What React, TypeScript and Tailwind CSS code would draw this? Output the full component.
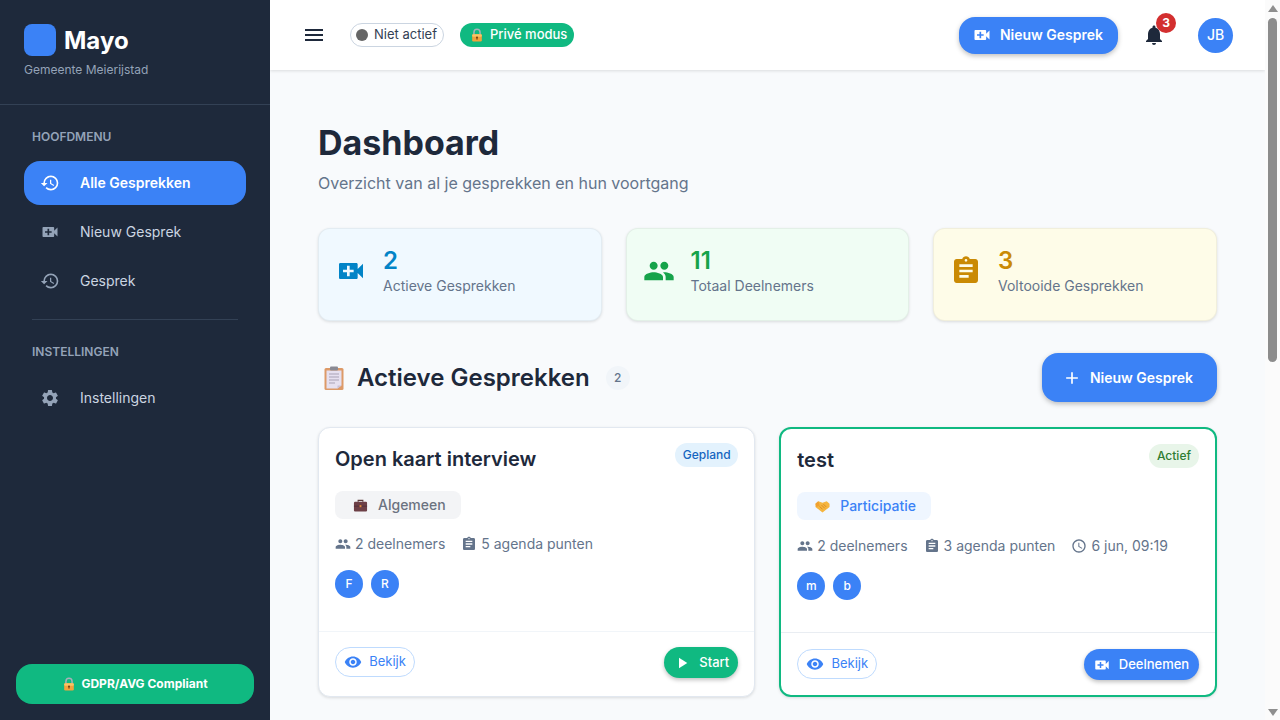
import type { ReactNode } from 'react'
import {
  MdAccessTime,
  MdAdd,
  MdAssignment,
  MdHistory,
  MdMenu,
  MdNotifications,
  MdPeople,
  MdPlayArrow,
  MdSettings,
  MdVideoCall,
  MdVisibility,
} from 'react-icons/md'

function LockEmoji({ size = 14 }: { size?: number }) {
  return (
    <svg width={size} height={size} viewBox="0 0 16 16" className="shrink-0">
      <path d="M4.5 8V5a3.5 3.5 0 0 1 7 0v3" fill="none" stroke="#a8b0b8" strokeWidth="1.7" />
      <rect x="2.5" y="7" width="11" height="8.5" rx="1.5" fill="#f2a33c" />
      <rect x="2.5" y="7" width="11" height="3" rx="1.2" fill="#f9c566" />
      <circle cx="8" cy="10.8" r="1.1" fill="#6b3d12" />
      <rect x="7.5" y="11" width="1" height="2.4" fill="#6b3d12" />
    </svg>
  )
}

function ClipboardEmoji() {
  return (
    <svg width="24" height="24" viewBox="0 0 24 24" className="shrink-0">
      <rect x="2.5" y="2" width="19" height="22" rx="1.5" fill="#dd9a68" />
      <path d="M4.5 4.5h15v15l-4 3h-11z" fill="#e6e0f0" />
      <path d="M15.5 22.5v-3h4z" fill="#c9c0d6" />
      <rect x="8" y="0.5" width="8" height="4" rx="1" fill="#8a8a94" />
      <path d="M7 8h10M7 11h10M7 14h10M7 17h6" stroke="#a9a2b6" strokeWidth="1" />
    </svg>
  )
}

function BriefcaseEmoji() {
  return (
    <svg width="15" height="15" viewBox="0 0 16 16" className="shrink-0">
      <path d="M5.5 4V2.5h5V4" fill="none" stroke="#5b3a3a" strokeWidth="1.2" />
      <rect x="1" y="4" width="14" height="10.5" rx="1.2" fill="#6d3f46" />
      <rect x="1" y="8.2" width="14" height="1" fill="#54303a" />
      <rect x="7" y="7.6" width="2" height="2.2" fill="#e08a3a" />
    </svg>
  )
}

function HandshakeEmoji() {
  return (
    <svg width="15" height="15" viewBox="0 0 16 16" className="shrink-0">
      <path d="M0.5 5 3.5 2.5 8 4l4.5-1.5 3 2.5v3.5L8 14.5 0.5 8.5z" fill="#f5b53f" />
      <path d="M5 8l3 3M7 6.5l3.5 3.5M9 5.5l3 3" stroke="#d98a20" strokeWidth="1" fill="none" />
      <path d="M0.5 5 3.5 2.5 5 7 1.5 8.5z" fill="#f0a030" />
    </svg>
  )
}

function NavItem({ icon, label, active }: { icon: ReactNode; label: string; active?: boolean }) {
  return (
    <div
      className={
        active
          ? 'flex h-11 items-center gap-[20px] rounded-2xl bg-[#3b82f6] px-4 text-sm font-semibold text-white'
          : 'flex h-11 items-center gap-[20px] rounded-2xl px-4 text-sm text-[#cbd5e1]'
      }
    >
      <span className={active ? 'text-white' : 'text-[#94a3b8]'}>{icon}</span>
      {label}
    </div>
  )
}

function Sidebar() {
  return (
    <aside className="flex h-screen w-[270px] shrink-0 flex-col bg-[#1e293b]">
      <div className="h-[105px] border-b border-[#334155] px-6 pt-6">
        <div className="flex items-start gap-2">
          <div className="h-8 w-8 rounded-lg bg-[#3b82f6]" />
          <span className="mt-[1px] text-2xl font-bold leading-8 text-white">Mayo</span>
        </div>
        <p className="mt-[5px] text-xs leading-[16px] text-[#94a3b8]">Gemeente Meierijstad</p>
      </div>

      <nav className="px-6 pt-6">
        <h4 className="px-2 text-xs font-semibold uppercase leading-[16px] text-[#94a3b8]">Hoofdmenu</h4>
        <div className="mt-4 flex flex-col gap-[5px]">
          <NavItem active icon={<MdHistory size={20} />} label="Alle Gesprekken" />
          <NavItem icon={<MdVideoCall size={20} />} label="Nieuw Gesprek" />
          <NavItem icon={<MdHistory size={20} />} label="Gesprek" />
        </div>
        <div className="mx-2 mt-4 border-t border-[#334155]" />
        <h4 className="mt-6 px-2 text-xs font-semibold uppercase leading-[16px] text-[#94a3b8]">Instellingen</h4>
        <div className="mt-[16px]">
          <NavItem icon={<MdSettings size={20} />} label="Instellingen" />
        </div>
      </nav>

      <div className="mt-auto px-4 pb-4">
        <div className="flex h-10 items-center justify-center gap-[5px] rounded-2xl bg-[#10b981] text-xs font-bold text-white">
          <LockEmoji size={14} />
          GDPR/AVG Compliant
        </div>
      </div>
    </aside>
  )
}

function Header() {
  return (
    <header className="relative z-10 flex h-[70px] items-center bg-white px-8 shadow-[0_1px_3px_rgba(0,0,0,0.12)]">
      <MdMenu size={24} className="text-[#1e293b]" />
      <div className="ml-[24px] flex h-6 items-center gap-[6px] rounded-full border border-[#cbd5e1] bg-white pl-[5px] pr-[6px] text-[13px] text-[#334155]">
        <span className="h-3 w-3 rounded-full bg-[#666666]" />
        Niet actief
      </div>
      <div className="ml-4 flex h-6 items-center gap-[6px] rounded-full bg-[#10b981] pl-[10px] pr-[7px] text-[13px] font-medium text-white">
        <LockEmoji size={14} />
        Privé modus
      </div>
      <button className="ml-auto flex h-[37px] items-center gap-2 rounded-2xl bg-[#3b82f6] pl-[13px] pr-[15px] text-sm font-semibold text-white shadow-[0_2px_5px_rgba(0,0,0,0.25)]">
        <MdVideoCall size={20} />
        Nieuw Gesprek
      </button>
      <div className="relative ml-[24px]">
        <MdNotifications size={24} className="text-[#1e293b]" />
        <span className="absolute -top-[10px] left-[14px] flex h-5 w-5 items-center justify-center rounded-full bg-[#d32f2f] text-xs font-bold text-white">
          3
        </span>
      </div>
      <div className="ml-[32px] flex h-[35px] w-[35px] items-center justify-center rounded-full bg-[#3b82f6] text-sm font-medium text-white">
        JB
      </div>
    </header>
  )
}

function StatCard({
  icon,
  value,
  label,
  cardClass,
  valueClass,
}: {
  icon: ReactNode
  value: string
  label: string
  cardClass: string
  valueClass: string
}) {
  return (
    <div className={`flex h-[93px] items-center gap-4 rounded-xl border border-black/5 px-4 pb-2 shadow-[0_1px_3px_rgba(0,0,0,0.12)] ${cardClass}`}>
      {icon}
      <div>
        <div className={`text-2xl font-semibold leading-[31px] ${valueClass}`}>{value}</div>
        <div className="text-sm leading-5 text-[#64748b]">{label}</div>
      </div>
    </div>
  )
}

function Meta({ icon, children }: { icon: ReactNode; children: ReactNode }) {
  return (
    <span className="flex items-center gap-1 text-sm text-[#64748b]">
      {icon}
      {children}
    </span>
  )
}

function Avatar({ letter }: { letter: string }) {
  return (
    <div className="flex h-7 w-7 items-center justify-center rounded-full bg-[#3b82f6] text-xs font-medium text-white">
      {letter}
    </div>
  )
}

function ViewButton() {
  return (
    <button className="flex h-[30px] w-[80px] items-center justify-center gap-[7px] rounded-full border border-[#bfdbfe] bg-white text-[13px] text-[#3b82f6]">
      <MdVisibility size={18} />
      Bekijk
    </button>
  )
}

function SessionCard({
  title,
  status,
  statusClass,
  tag,
  tagClass,
  tagIcon,
  agenda,
  time,
  avatars,
  action,
  highlight,
}: {
  title: string
  status: string
  statusClass: string
  tag: string
  tagClass: string
  tagIcon: ReactNode
  agenda: string
  time?: string
  avatars: string[]
  action: ReactNode
  highlight?: boolean
}) {
  return (
    <div
      className={
        highlight
          ? 'flex h-[270px] flex-col rounded-xl border-2 border-[#10b981] bg-white shadow-[0_1px_3px_rgba(0,0,0,0.12)]'
          : 'flex h-[270px] flex-col rounded-xl border border-[#e2e8f0] bg-white shadow-[0_1px_3px_rgba(0,0,0,0.12)]'
      }
    >
      <div className="flex-1 px-4 pt-[15px]">
        <div className="flex h-[29px] items-start justify-between">
          <h3 className="pt-[2px] text-xl font-semibold leading-[28px] text-[#1e293b]">{title}</h3>
          <span className={`rounded-full px-[7.5px] py-[3px] text-xs font-medium leading-[18px] ${statusClass}`}>{status}</span>
        </div>
        <div className={`mt-[19px] inline-flex h-7 items-center gap-[10px] rounded-lg pl-[18px] pr-[15.5px] text-sm font-medium ${tagClass}`}>
          {tagIcon}
          {tag}
        </div>
        <div className={highlight ? 'mt-4 flex h-5 items-center gap-4' : 'mt-[15px] flex h-5 items-center gap-4'}>
          <Meta icon={<MdPeople size={16} />}>2 deelnemers</Meta>
          <Meta icon={<MdAssignment size={16} />}>{agenda}</Meta>
          {time && <Meta icon={<MdAccessTime size={16} />}>{time}</Meta>}
        </div>
        <div className="mt-4 flex gap-2">
          {avatars.map(a => (
            <Avatar key={a} letter={a} />
          ))}
        </div>
      </div>
      <div
        className={
          highlight
            ? 'flex h-[63px] items-start justify-between border-t border-[#e9edf2] px-4 pt-4'
            : 'flex h-[65px] items-start justify-between border-t border-[#f1f5f9] px-4 pt-[15px]'
        }
      >
        <ViewButton />
        {action}
      </div>
    </div>
  )
}

function Scrollbar() {
  return (
    <div className="flex h-screen w-[15px] shrink-0 flex-col items-center bg-[#fbfbfb] pb-[4px] pt-[5px]">
      <svg width="10" height="7" viewBox="0 0 10 7">
        <path d="M5 0 10 7H0z" fill="#8f8f8f" />
      </svg>
      <div className="mt-[6px] h-[344px] w-[9px] rounded-full bg-[#8c8c8c]" />
      <svg width="10" height="7" viewBox="0 0 10 7" className="mt-auto">
        <path d="M0 0h10L5 7z" fill="#8f8f8f" />
      </svg>
    </div>
  )
}

export default function App() {
  return (
    <div className="flex h-screen overflow-hidden bg-[#f8fafc] font-['Inter',sans-serif]">
      <Sidebar />
      <div className="min-w-0 flex-1 overflow-hidden">
        <Header />
        <main className="pl-12 pr-[48.5px] pt-12">
          <h1 className="text-[34px] font-bold leading-[50px] text-[#1e293b]">Dashboard</h1>
          <p className="mt-[3px] text-base leading-6 text-[#64748b]">Overzicht van al je gesprekken en hun voortgang</p>

          <div className="mt-[33px] grid grid-cols-3 gap-6">
            <StatCard
              icon={<MdVideoCall size={32} className="text-[#0284c7]" />}
              value="2"
              label="Actieve Gesprekken"
              cardClass="bg-[#f0f9ff]"
              valueClass="text-[#0284c7]"
            />
            <StatCard
              icon={<MdPeople size={32} className="text-[#16a34a]" />}
              value="11"
              label="Totaal Deelnemers"
              cardClass="bg-[#f0fdf4]"
              valueClass="text-[#16a34a]"
            />
            <StatCard
              icon={<MdAssignment size={32} className="text-[#ca8a04]" />}
              value="3"
              label="Voltooide Gesprekken"
              cardClass="bg-[#fefce8]"
              valueClass="text-[#ca8a04]"
            />
          </div>

          <div className="mt-8 flex h-[49px] items-center">
            <div className="ml-[4px]">
              <ClipboardEmoji />
            </div>
            <h2 className="ml-[11px] text-2xl font-semibold text-[#1e293b]">Actieve Gesprekken</h2>
            <span className="ml-4 flex h-6 w-6 items-center justify-center rounded-full bg-[#f1f5f9] text-xs font-medium text-[#64748b]">
              2
            </span>
            <button className="ml-auto flex h-[49px] items-center gap-2 rounded-2xl bg-[#3b82f6] pl-5 pr-[23.5px] text-sm font-semibold text-white shadow-[0_2px_5px_rgba(0,0,0,0.25)]">
              <MdAdd size={20} />
              Nieuw Gesprek
            </button>
          </div>

          <div className="mt-[25px] grid grid-cols-2 gap-6">
            <SessionCard
              title="Open kaart interview"
              status="Gepland"
              statusClass="bg-[#e3f2fd] text-[#1565c0]"
              tag="Algemeen"
              tagClass="bg-[#f3f4f6] text-[#6b7280]"
              tagIcon={<BriefcaseEmoji />}
              agenda="5 agenda punten"
              avatars={['F', 'R']}
              action={
                <button className="flex h-[31px] w-[74px] items-center justify-center gap-[8px] rounded-full bg-[#10b981] text-[13px] font-medium text-white shadow-[0_2px_4px_rgba(0,0,0,0.25)]">
                  <MdPlayArrow size={18} />
                  Start
                </button>
              }
            />
            <SessionCard
              highlight
              title="test"
              status="Actief"
              statusClass="bg-[#e8f5e9] text-[#2e7d32]"
              tag="Participatie"
              tagClass="bg-[#eff6ff] text-[#3b82f6]"
              tagIcon={<HandshakeEmoji />}
              agenda="3 agenda punten"
              time="6 jun, 09:19"
              avatars={['m', 'b']}
              action={
                <button className="flex h-[31px] w-[115px] items-center justify-center gap-[8px] rounded-full bg-[#3b82f6] text-[13px] font-medium text-white shadow-[0_2px_4px_rgba(0,0,0,0.25)]">
                  <MdVideoCall size={18} />
                  Deelnemen
                </button>
              }
            />
          </div>
        </main>
      </div>
      <Scrollbar />
    </div>
  )
}
